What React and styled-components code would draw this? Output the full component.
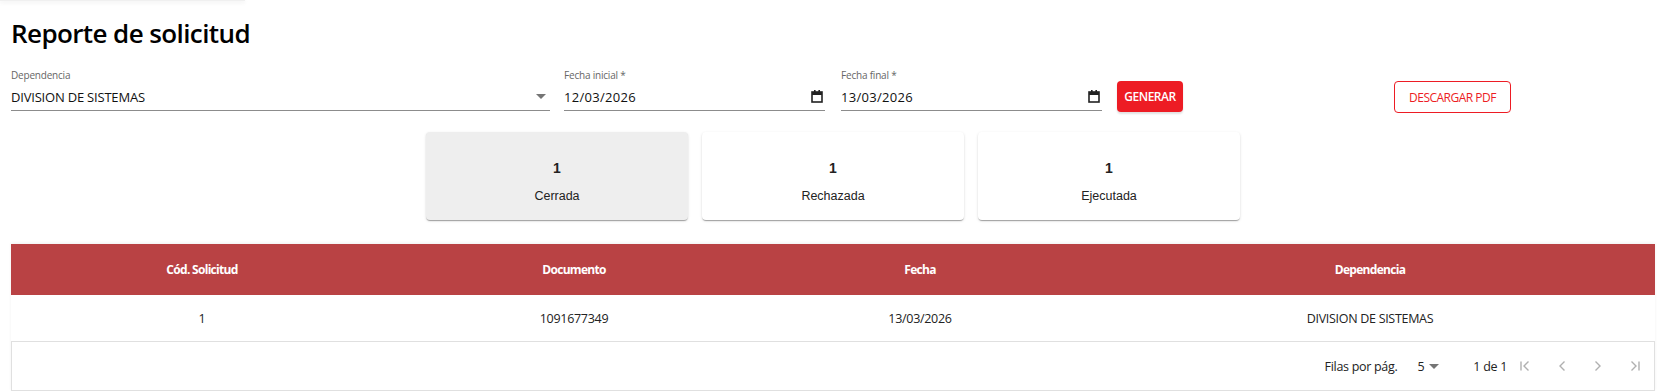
import React from "react";
import styled, { createGlobalStyle } from "styled-components";

const GlobalStyle = createGlobalStyle`
  html, body {
    margin: 0;
    padding: 0;
    background: #ffffff;
    font-family: "Open Sans", "Noto Sans", sans-serif;
    color: #111;
  }
`;

const Page = styled.div`
  width: 1657px;
  height: 391px;
  overflow: hidden;
  box-sizing: border-box;
  padding: 0 2px 0 11px;
`;

const TopShade = styled.div`
  width: 245px;
  height: 1px;
  margin-left: -11px;
  background: #f0f0f0;
  box-shadow: 0 1px 4px rgba(0, 0, 0, 0.16);
`;

const Title = styled.h1`
  margin: 14px 0 0 0;
  font-family: "Open Sans", sans-serif;
  font-weight: 600;
  font-size: 26px;
  line-height: 36px;
  letter-spacing: -0.6px;
  color: #000;
`;

const FilterRow = styled.div`
  display: flex;
  align-items: flex-start;
  margin-top: 17px;
  height: 44px;
`;

const Field = styled.div`
  width: ${(p) => p.width}px;
  margin-right: ${(p) => p.gap}px;
  display: flex;
  flex-direction: column;
`;

const FieldLabel = styled.div`
  font-size: 10px;
  line-height: 14px;
  color: #666;
  letter-spacing: -0.2px;
`;

const FieldInput = styled.div`
  display: flex;
  align-items: center;
  justify-content: space-between;
  height: 29px;
  padding-top: 1px;
  box-sizing: border-box;
  border-bottom: 1px solid #8c8c8c;
  font-size: 13px;
  color: #111;
  letter-spacing: ${(p) => (p.date ? "0.3px" : "-0.2px")};
  padding-right: ${(p) => (p.date ? "2px" : "4px")};
`;

const SolidButton = styled.button`
  margin-top: 13px;
  width: 66px;
  height: 31px;
  border: none;
  border-radius: 4px;
  background: #ed1c24;
  color: #fff;
  font-family: "Open Sans", sans-serif;
  font-weight: 600;
  font-size: 12px;
  letter-spacing: -0.5px;
  padding: 0;
  box-shadow: 0 2px 2px rgba(0, 0, 0, 0.12);
`;

const OutlineButton = styled.button`
  margin-top: 13px;
  margin-left: 211px;
  width: 117px;
  height: 32px;
  border: 1px solid #ed1c24;
  border-radius: 4px;
  background: #fff;
  color: #ed1c24;
  font-family: "Open Sans", sans-serif;
  font-size: 12px;
  letter-spacing: -0.5px;
  padding: 0;
`;

const CardRow = styled.div`
  display: flex;
  justify-content: center;
  gap: 14px;
  margin-top: 20px;
`;

const StatCard = styled.div`
  width: 262px;
  height: 88px;
  box-sizing: border-box;
  border-radius: 4px;
  background: ${(p) => (p.active ? "#eeeeee" : "#ffffff")};
  box-shadow: 0 2px 1px -1px rgba(0, 0, 0, 0.2), 0 1px 1px rgba(0, 0, 0, 0.14),
    0 1px 3px rgba(0, 0, 0, 0.12);
  display: flex;
  flex-direction: column;
  align-items: center;
  padding-top: 28px;
  font-family: "Liberation Sans", Arial, sans-serif;
`;

const StatValue = styled.div`
  font-size: 14px;
  font-weight: 700;
  line-height: 17px;
  color: #222;
`;

const StatLabel = styled.div`
  margin-top: 11px;
  font-size: 12.5px;
  line-height: 16px;
  color: #222;
`;

const TablePaper = styled.div`
  margin-top: 24px;
  width: 1644px;
  background: #fff;
  box-shadow: 0 -1px 3px rgba(0, 0, 0, 0.06);
`;

const Table = styled.table`
  width: 100%;
  border-collapse: collapse;
  table-layout: fixed;
`;

const HeadCell = styled.th`
  width: ${(p) => p.w}px;
  height: 51px;
  background: #b94244;
  color: #fff;
  font-weight: 700;
  font-size: 12px;
  letter-spacing: -0.7px;
  text-align: center;
  padding: 0;
`;

const BodyCell = styled.td`
  height: 46px;
  font-size: 12.5px;
  letter-spacing: -0.3px;
  color: #222;
  text-align: center;
  padding: 0;
`;

const Footer = styled.div`
  height: 50px;
  box-sizing: border-box;
  border: 1px solid #e0e0e0;
  display: flex;
  align-items: center;
  justify-content: flex-end;
  padding-right: 2px;
  font-size: 12.5px;
  letter-spacing: -0.3px;
  color: #222;
`;

const RowsSelect = styled.div`
  display: flex;
  align-items: center;
  gap: 5px;
  margin-left: 20px;
  margin-right: 34px;
`;

const PageInfo = styled.span`
  margin-right: 1px;
`;

const PagerIcon = styled.span`
  display: inline-flex;
  width: 36px;
  justify-content: center;
`;

const Caret = () => (
  <svg width="10" height="5" viewBox="0 0 10 5">
    <path d="M0 0h10L5 5z" fill="#757575" />
  </svg>
);

const CalendarIcon = () => (
  <svg width="12" height="13" viewBox="0 0 12 13">
    <rect x="1" y="2" width="10" height="10" fill="none" stroke="#222" strokeWidth="1.6" />
    <rect x="1" y="2" width="10" height="3" fill="#222" />
    <rect x="3" y="0" width="1.6" height="3" fill="#222" />
    <rect x="7.4" y="0" width="1.6" height="3" fill="#222" />
  </svg>
);

const Chevron = ({ dir, bar }) => (
  <svg width="16" height="16" viewBox="0 0 16 16" fill="none" stroke="#b0b0b0" strokeWidth="1.4">
    {dir === "left" ? <path d="M10.5 3.5L6 8l4.5 4.5" /> : <path d="M5.5 3.5L10 8l-4.5 4.5" />}
    {bar && dir === "left" && <path d="M3 3.5v9" />}
    {bar && dir === "right" && <path d="M13 3.5v9" />}
  </svg>
);

const columns = [
  { title: "Cód. Solicitud", w: 382 },
  { title: "Documento", w: 362 },
  { title: "Fecha", w: 330 },
  { title: "Dependencia", w: 570 },
];

const rows = [["1", "1091677349", "13/03/2026", "DIVISION DE SISTEMAS"]];

const stats = [
  { label: "Cerrada", value: 1, active: true },
  { label: "Rechazada", value: 1 },
  { label: "Ejecutada", value: 1 },
];

export default function App() {
  return (
    <Page>
      <GlobalStyle />
      <TopShade />
      <Title>Reporte de solicitud</Title>

      <FilterRow>
        <Field width={539} gap={14}>
          <FieldLabel>Dependencia</FieldLabel>
          <FieldInput>
            DIVISION DE SISTEMAS
            <Caret />
          </FieldInput>
        </Field>
        <Field width={261} gap={16}>
          <FieldLabel>Fecha inicial *</FieldLabel>
          <FieldInput date>
            12/03/2026
            <CalendarIcon />
          </FieldInput>
        </Field>
        <Field width={261} gap={15}>
          <FieldLabel>Fecha final *</FieldLabel>
          <FieldInput date>
            13/03/2026
            <CalendarIcon />
          </FieldInput>
        </Field>
        <SolidButton>GENERAR</SolidButton>
        <OutlineButton>DESCARGAR PDF</OutlineButton>
      </FilterRow>

      <CardRow>
        {stats.map((s) => (
          <StatCard key={s.label} active={s.active}>
            <StatValue>{s.value}</StatValue>
            <StatLabel>{s.label}</StatLabel>
          </StatCard>
        ))}
      </CardRow>

      <TablePaper>
        <Table>
          <thead>
            <tr>
              {columns.map((c) => (
                <HeadCell key={c.title} w={c.w}>
                  {c.title}
                </HeadCell>
              ))}
            </tr>
          </thead>
          <tbody>
            {rows.map((r) => (
              <tr key={r[0]}>
                {r.map((v, i) => (
                  <BodyCell key={i}>{v}</BodyCell>
                ))}
              </tr>
            ))}
          </tbody>
        </Table>
        <Footer>
          Filas por pág.
          <RowsSelect>
            5 <Caret />
          </RowsSelect>
          <PageInfo>1 de 1</PageInfo>
          <PagerIcon>
            <Chevron dir="left" bar />
          </PagerIcon>
          <PagerIcon>
            <Chevron dir="left" />
          </PagerIcon>
          <PagerIcon>
            <Chevron dir="right" />
          </PagerIcon>
          <PagerIcon>
            <Chevron dir="right" bar />
          </PagerIcon>
        </Footer>
      </TablePaper>
    </Page>
  );
}
